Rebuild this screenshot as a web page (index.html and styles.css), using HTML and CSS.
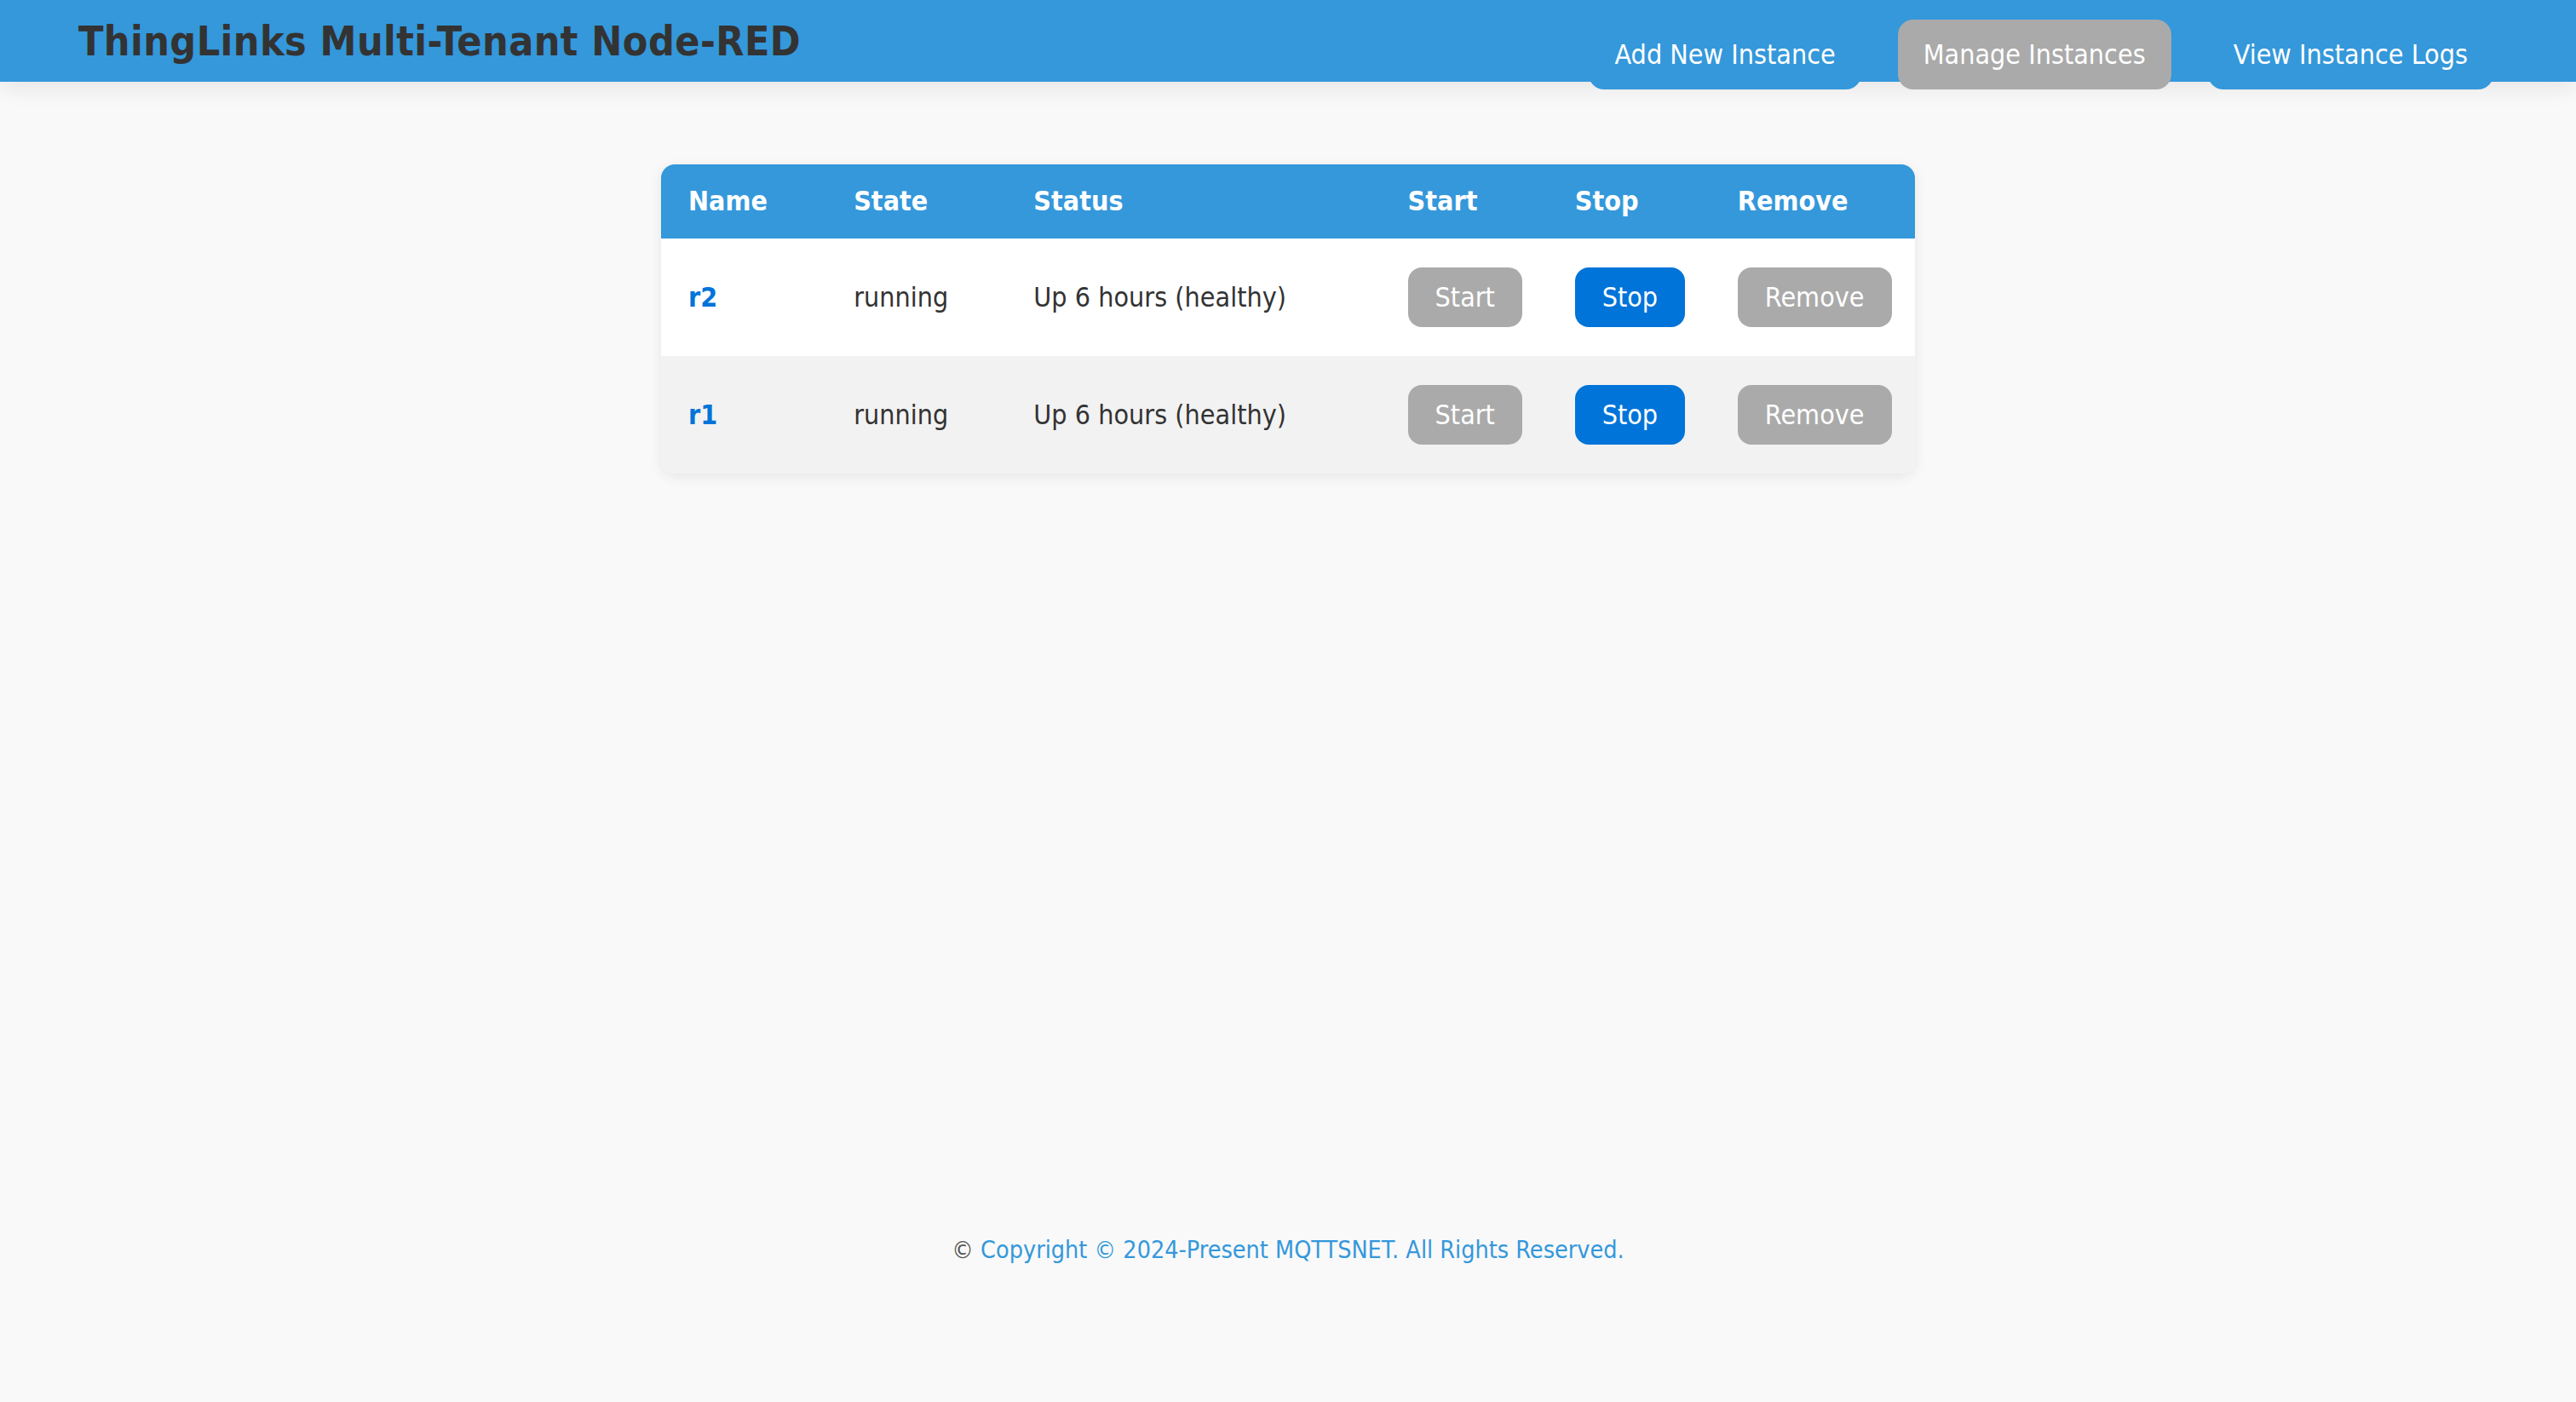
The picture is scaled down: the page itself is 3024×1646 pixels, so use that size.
FILE: index.html
```html
<!DOCTYPE html>
<html lang="en">
<head>
<meta charset="utf-8">
<title>ThingLinks Multi-Tenant Node-RED</title>
<link rel="stylesheet" href="styles.css">
</head>
<body>
<div class="page">
  <header class="topbar">
    <h1 class="brand">ThingLinks Multi-Tenant Node-RED</h1>
    <nav class="nav">
      <a class="nav-link" href="#">Add New Instance</a>
      <a class="nav-link active" href="#">Manage Instances</a>
      <a class="nav-link" href="#">View Instance Logs</a>
    </nav>
  </header>
  <main class="content">
    <table class="instances">
      <thead>
        <tr>
          <th class="c-name">Name</th>
          <th class="c-state">State</th>
          <th class="c-status">Status</th>
          <th class="c-start">Start</th>
          <th class="c-stop">Stop</th>
          <th class="c-remove">Remove</th>
        </tr>
      </thead>
      <tbody>
        <tr>
          <td><a class="inst-link" href="#">r2</a></td>
          <td>running</td>
          <td>Up 6 hours (healthy)</td>
          <td><button class="btn btn-gray">Start</button></td>
          <td><button class="btn btn-blue">Stop</button></td>
          <td><button class="btn btn-gray">Remove</button></td>
        </tr>
        <tr>
          <td><a class="inst-link" href="#">r1</a></td>
          <td>running</td>
          <td>Up 6 hours (healthy)</td>
          <td><button class="btn btn-gray">Start</button></td>
          <td><button class="btn btn-blue">Stop</button></td>
          <td><button class="btn btn-gray">Remove</button></td>
        </tr>
      </tbody>
    </table>
  </main>
  <footer class="footer">
    <span class="copy-mark">©</span> <a class="copy-link" href="#">Copyright © 2024-Present MQTTSNET. All Rights Reserved.</a>
  </footer>
</div>
</body>
</html>
```
FILE: styles.css
```css
html, body {
  margin: 0;
  padding: 0;
}
body {
  background: #f9f9f9;
  color: #333333;
  font-family: "DejaVu Sans Condensed", "DejaVu Sans", sans-serif;
  font-stretch: semi-condensed;
}
.page {
  display: flex;
  flex-direction: column;
  min-height: 100vh;
}
.topbar {
  height: 96px;
  box-sizing: border-box;
  background: #3498db;
  display: flex;
  justify-content: space-between;
  padding: 0 97px 0 92px;
  box-shadow: 0 8px 24px rgba(0, 0, 0, 0.08);
}
.brand {
  margin: 0;
  align-self: center;
  font-size: 48px;
  font-weight: bold;
  letter-spacing: 0.4px;
  color: #333333;
  line-height: 1;
}
.nav {
  display: flex;
  gap: 43px;
  align-self: flex-start;
  margin-top: 23px;
}
.nav-link {
  height: 82px;
  box-sizing: border-box;
  padding: 0 30px;
  display: flex;
  align-items: center;
  border-radius: 18px;
  background: #3498db;
  color: #ffffff;
  font-size: 32px;
  text-decoration: none;
}
.nav-link.active {
  background: #aaaaaa;
}
.content {
  flex: 1;
  padding-top: 97px;
}
.instances {
  width: 1472px;
  margin: 0 auto;
  border-collapse: separate;
  border-spacing: 0;
  border-radius: 16px;
  overflow: hidden;
  background: #ffffff;
  box-shadow: 0 4px 16px rgba(0, 0, 0, 0.08);
  font-size: 32px;
  table-layout: fixed;
}
.instances th {
  background: #3498db;
  color: #ffffff;
  font-weight: bold;
  text-align: left;
  padding: 24px 32px;
  line-height: 39px;
}
.instances td {
  padding: 24px 32px;
  line-height: 39px;
  color: #333333;
  white-space: nowrap;
}
.instances tbody tr:nth-child(2) td {
  background: #f2f2f2;
}
.c-name { width: 130px; }
.c-state { width: 147px; }
.c-status { width: 375px; }
.c-start { width: 132px; }
.c-stop { width: 127px; }
.c-remove { width: 176px; }
.inst-link {
  color: #0074d9;
  font-weight: bold;
  text-decoration: none;
}
.btn {
  display: block;
  margin: 10px 0;
  height: 70px;
  padding: 0 32px;
  border: none;
  border-radius: 16px;
  color: #ffffff;
  font-family: inherit;
  font-stretch: inherit;
  font-size: 32px;
  line-height: 70px;
}
.btn-gray {
  background: #aaaaaa;
}
.btn-blue {
  background: #0074d9;
}
.footer {
  text-align: center;
  font-size: 28.5px;
  line-height: 36px;
  padding: 0 0 160px;
  color: #555555;
}
.copy-link {
  color: #3498db;
  text-decoration: none;
}
```
